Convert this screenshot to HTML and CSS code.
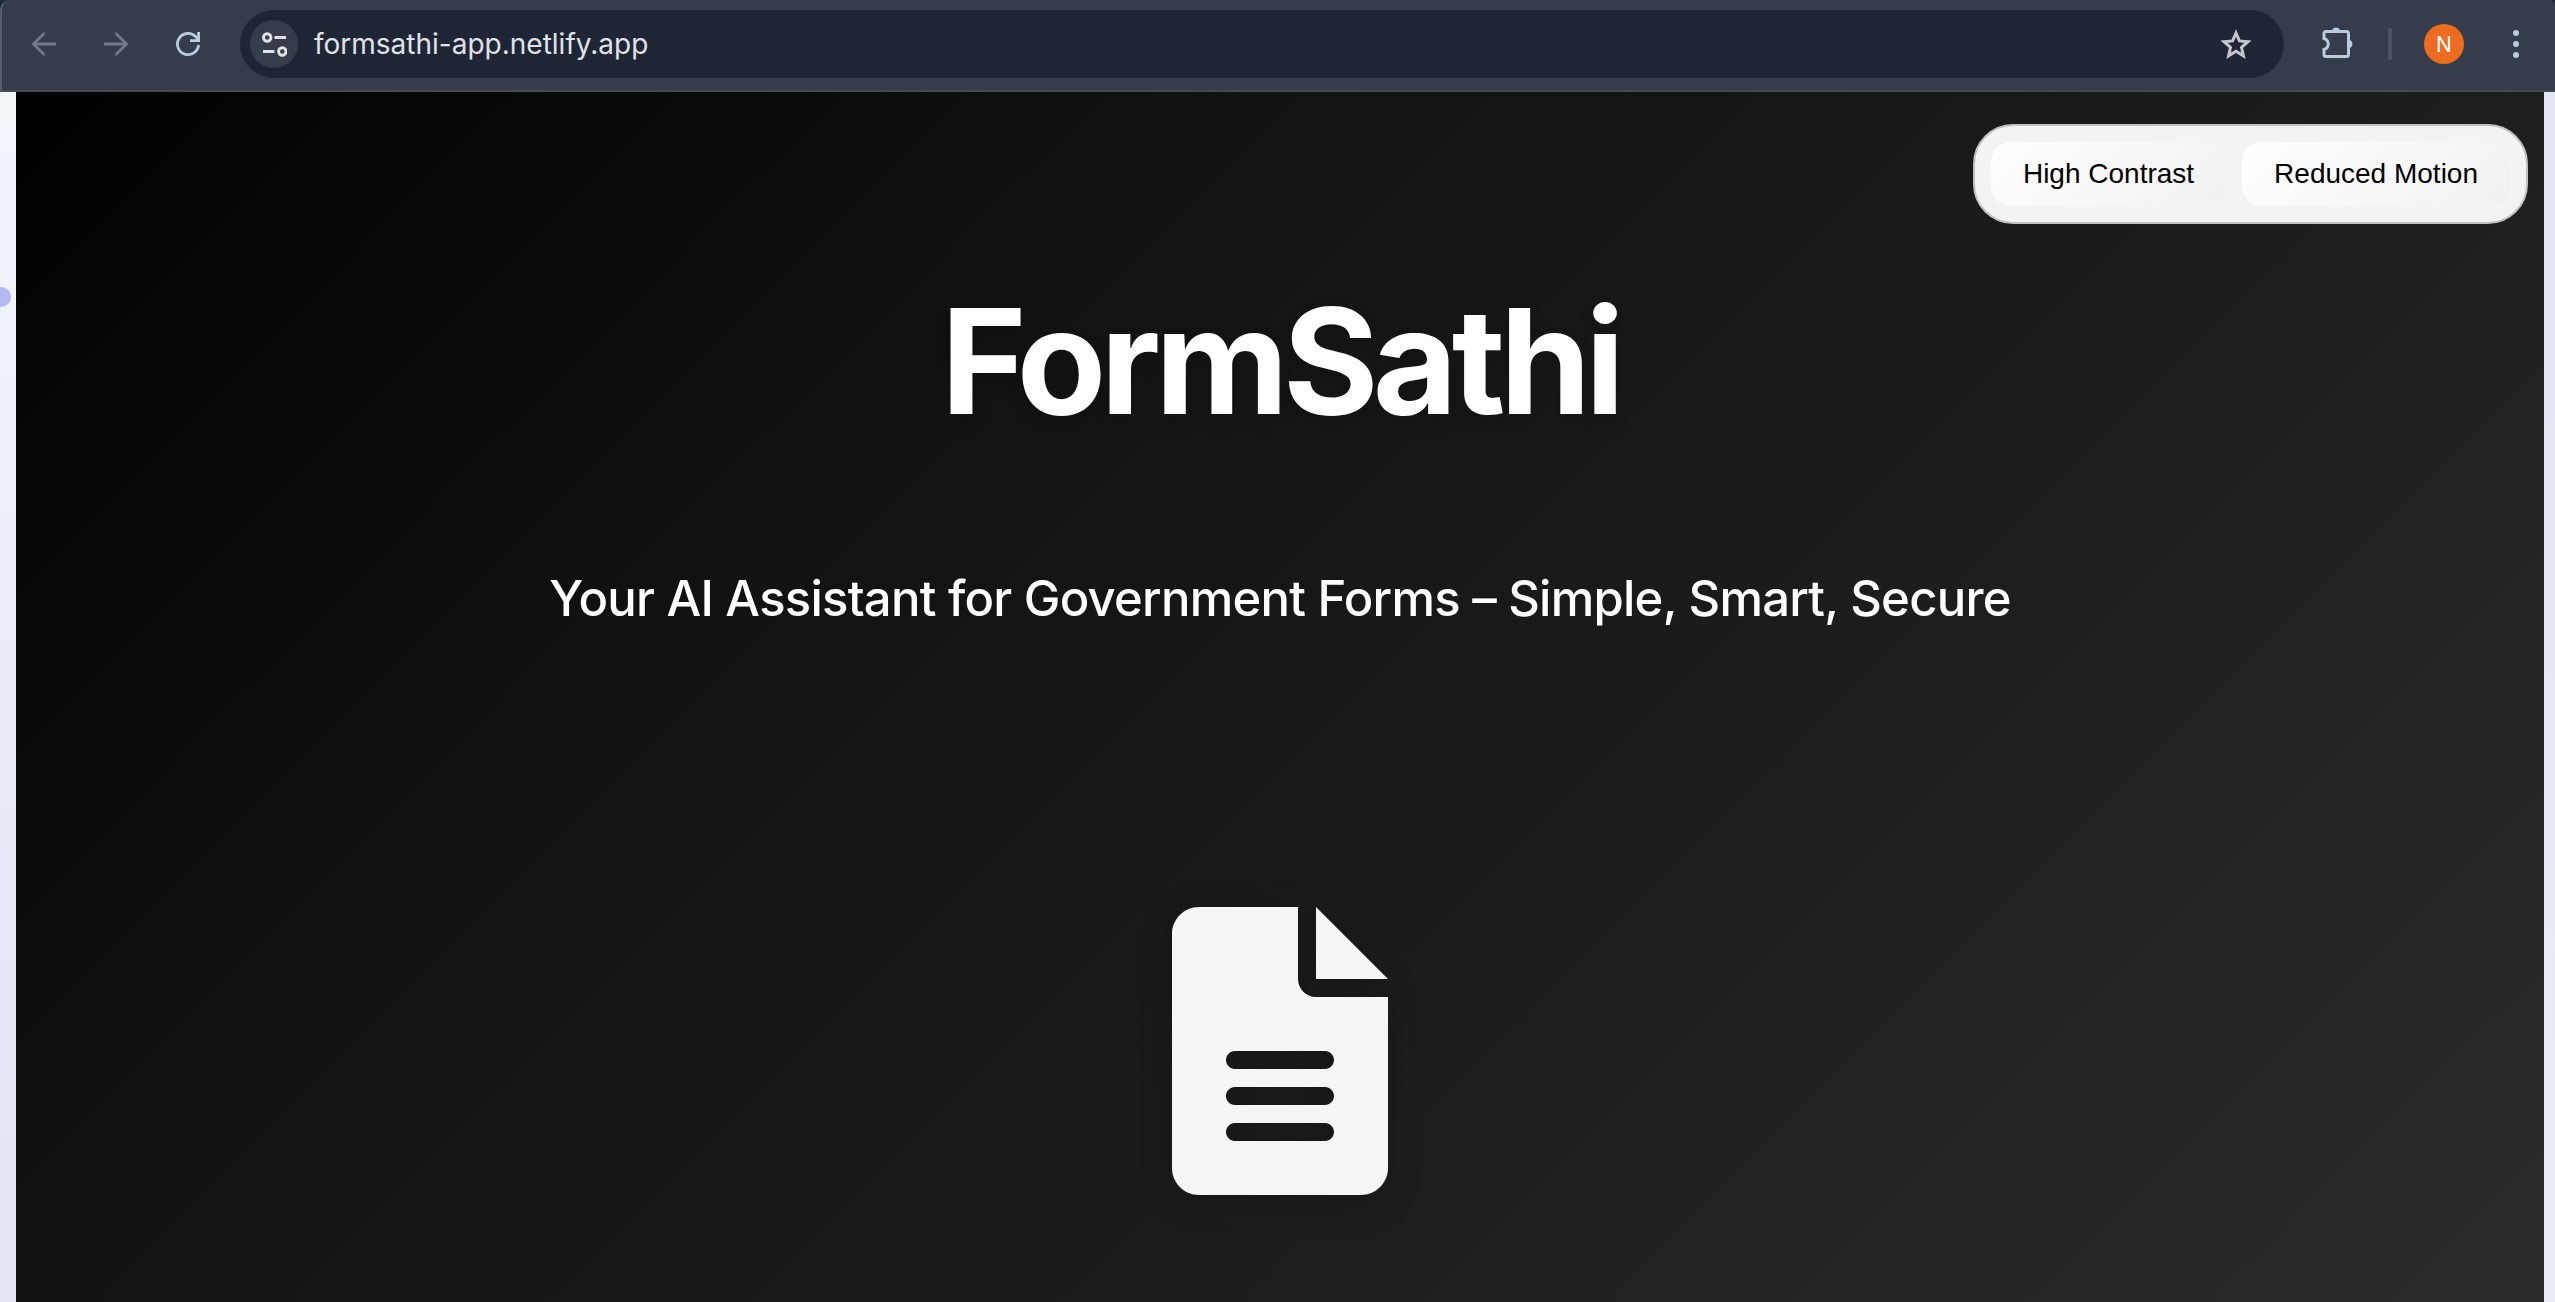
FILE: index.html
```html
<!DOCTYPE html>
<html lang="en">
<head>
  <meta charset="UTF-8" />
  <meta name="viewport" content="width=device-width, initial-scale=1.0"/>
  <title>FormSathi</title>
  <link rel="stylesheet" href="styles.css">
</head>
<body>
  <!-- Browser bar -->
  <div class="toolbar">
    <div class="nav">
      <svg class="nav-icon dim" viewBox="0 0 24 24"><path d="M24 12H2M12.5 1L1.5 12l11 11"/></svg>
      <svg class="nav-icon dim" viewBox="0 0 24 24"><path d="M0 12h22M11.5 1l11 11-11 11"/></svg>
      <svg class="nav-icon" viewBox="0 0 24 24"><path d="M22.6 13A10.6 10.6 0 1 1 19.6 4.6L22 7.2M22.6 0v8.6H14"/></svg>
    </div>
    <div class="address">
      <div class="site-info">
        <svg viewBox="0 0 24 24"><circle cx="5" cy="5.3" r="3.6"/><path d="M12 5.3h11M1 18.7h11"/><circle cx="19.5" cy="18.7" r="3.6"/></svg>
      </div>
      <span class="url">formsathi-app.netlify.app</span>
      <svg class="star" viewBox="0 0 32 30"><path d="M16 4l3.4 7.9 8.6.8-6.500 5.700 1.900 8.400L16 22.300l-7.400 4.500 1.900-8.400L4 12.700l8.600-.8z"/></svg>
    </div>
    <svg class="puzzle" viewBox="0 0 32 32"><path class="line" d="M4 5.500h20.500a2 2 0 0 1 2 2v21a2 2 0 0 1-2 2H4a2 2 0 0 1-2-2V23.500a5.700 5.700 0 0 0 0-11V7.500a2 2 0 0 1 2-2z"/><path class="knob" d="M10 4.500a4.200 4.200 0 0 1 8 0zM27.500 14a4.200 4.200 0 0 1 0 8z"/></svg>
    <div class="divider"></div>
    <div class="avatar">N</div>
    <div class="dots"><i></i><i></i><i></i></div>
  </div>

  <div class="window">
    <div class="rail rail-left"><span class="orb"></span></div>
    <main class="page">
      <div class="accessibility">
        <button>High Contrast</button>
        <button>Reduced Motion</button>
      </div>
      <h1>FormSathi</h1>
      <p class="tagline">Your AI Assistant for Government Forms – Simple, Smart, Secure</p>
      <svg class="file-icon" viewBox="0 0 384 512"><path d="M48 0C21.500 0 0 21.500 0 48V464c0 26.500 21.500 48 48 48H336c26.500 0 48-21.500 48-48V160H256c-17.700 0-32-14.300-32-32V0H48zM256 0V128H384L256 0zM112 256H272c8.800 0 16 7.200 16 16s-7.200 16-16 16H112c-8.800 0-16-7.200-16-16s7.200-16 16-16zm0 64H272c8.800 0 16 7.200 16 16s-7.200 16-16 16H112c-8.800 0-16-7.200-16-16s7.200-16 16-16zm0 64H272c8.800 0 16 7.200 16 16s-7.200 16-16 16H112c-8.800 0-16-7.200-16-16s7.200-16 16-16z"/></svg>
    </main>
    <div class="rail rail-right"></div>
  </div>
</body>
</html>
```
FILE: styles.css
```css
* {
  box-sizing: border-box;
}

body {
  margin: 0;
  height: 100vh;
  display: flex;
  flex-direction: column;
  overflow: hidden;
  font-family: Inter, sans-serif;
  background: #1c2738;
}

/* Browser bar */
.toolbar {
  height: 92px;
  flex: none;
  display: flex;
  align-items: center;
  padding: 0 36px 2px 30px;
  background: #353d4d;
  border-left: 2px solid #56606b;
  border-bottom: 2px solid #434a50;
  border-radius: 10px 6px 0 0;
}

.nav {
  display: flex;
  gap: 48px;
  margin-right: 40px;
}

.nav-icon {
  width: 24px;
  height: 24px;
  overflow: visible;
  fill: none;
  stroke: #bccade;
  stroke-width: 2.8;
}

.nav-icon.dim {
  stroke: #727887;
}

.address {
  flex: 1;
  height: 68px;
  display: flex;
  align-items: center;
  padding: 0 32px 0 10px;
  border-radius: 34px;
  background: #1e2636;
}

.site-info {
  width: 48px;
  height: 48px;
  display: flex;
  align-items: center;
  justify-content: center;
  border-radius: 50%;
  background: #353d4d;
}

.site-info svg {
  width: 25px;
  height: 25px;
  fill: none;
  stroke: #e1e2e8;
  stroke-width: 2.8;
}

.url {
  flex: 1;
  margin-left: 16px;
  font-size: 28px;
  line-height: 34px;
  color: #e1e2e8;
}

.star {
  width: 32px;
  height: 30px;
  fill: none;
  stroke: #c5c5cd;
  stroke-width: 3;
}

.puzzle {
  width: 32px;
  height: 32px;
  margin: 0 34px 4px 38px;
}

.puzzle .line {
  fill: none;
  stroke: #bccade;
  stroke-width: 3;
}

.puzzle .knob {
  fill: #bccade;
}

.divider {
  width: 4px;
  height: 32px;
  border-radius: 2px;
  background: #4c5467;
}

.avatar {
  width: 40px;
  height: 40px;
  margin: 0 49px 0 32px;
  border-radius: 50%;
  background: #ed6c20;
  color: #fff;
  font-size: 21px;
  line-height: 41px;
  text-align: center;
}

.dots {
  display: flex;
  flex-direction: column;
  gap: 5px;
}

.dots i {
  width: 6px;
  height: 6px;
  border-radius: 50%;
  background: #bccade;
}

/* Page */
.window {
  flex: 1;
  min-height: 0;
  display: flex;
}

.rail {
  position: relative;
  overflow: hidden;
}

.rail-left {
  width: 16px;
  background: linear-gradient(#f1f5fa, #eff3fa 15%, #e0e4f6);
}

.rail-right {
  width: 11px;
  background: linear-gradient(#e1e5f5, #e9eef4);
}

.orb {
  position: absolute;
  left: -9px;
  top: 195px;
  width: 20px;
  height: 20px;
  border-radius: 50%;
  background: #b3b8f4;
}

.page {
  flex: 1;
  display: flex;
  flex-direction: column;
  align-items: center;
  padding: 32px 16px 0;
  background: linear-gradient(135deg, #000 0%, #101010 28%, #1a1a1a 56%, #2b2b2b 100%);
}

.accessibility {
  align-self: flex-end;
  height: 100px;
  display: flex;
  gap: 16px;
  padding: 16px;
  border: 2px solid #c0c0c0;
  border-radius: 40px;
  background: #f3f3f3;
}

.accessibility button {
  padding: 0 32px;
  border: none;
  border-radius: 20px;
  background: linear-gradient(135deg, #fff, #f0f0f0);
  font-family: "Liberation Sans", sans-serif;
  font-size: 28px;
  color: #000;
  cursor: pointer;
}

h1 {
  margin: 50px 0 0;
  font-size: 146px;
  line-height: 174px;
  font-weight: 700;
  letter-spacing: -5.700px;
  color: #fff;
  text-shadow: 0 8px 16px rgba(0, 0, 0, 0.15);
}

.tagline {
  margin: 121px 0 0;
  font-size: 49px;
  line-height: 60px;
  font-weight: 500;
  letter-spacing: -0.750px;
  color: #fff;
  white-space: nowrap;
}

.file-icon {
  width: 216px;
  height: 288px;
  margin-top: 278px;
  overflow: visible;
  fill: #f5f5f5;
  filter: drop-shadow(0 8px 16px rgba(0, 0, 0, 0.2));
}
```
